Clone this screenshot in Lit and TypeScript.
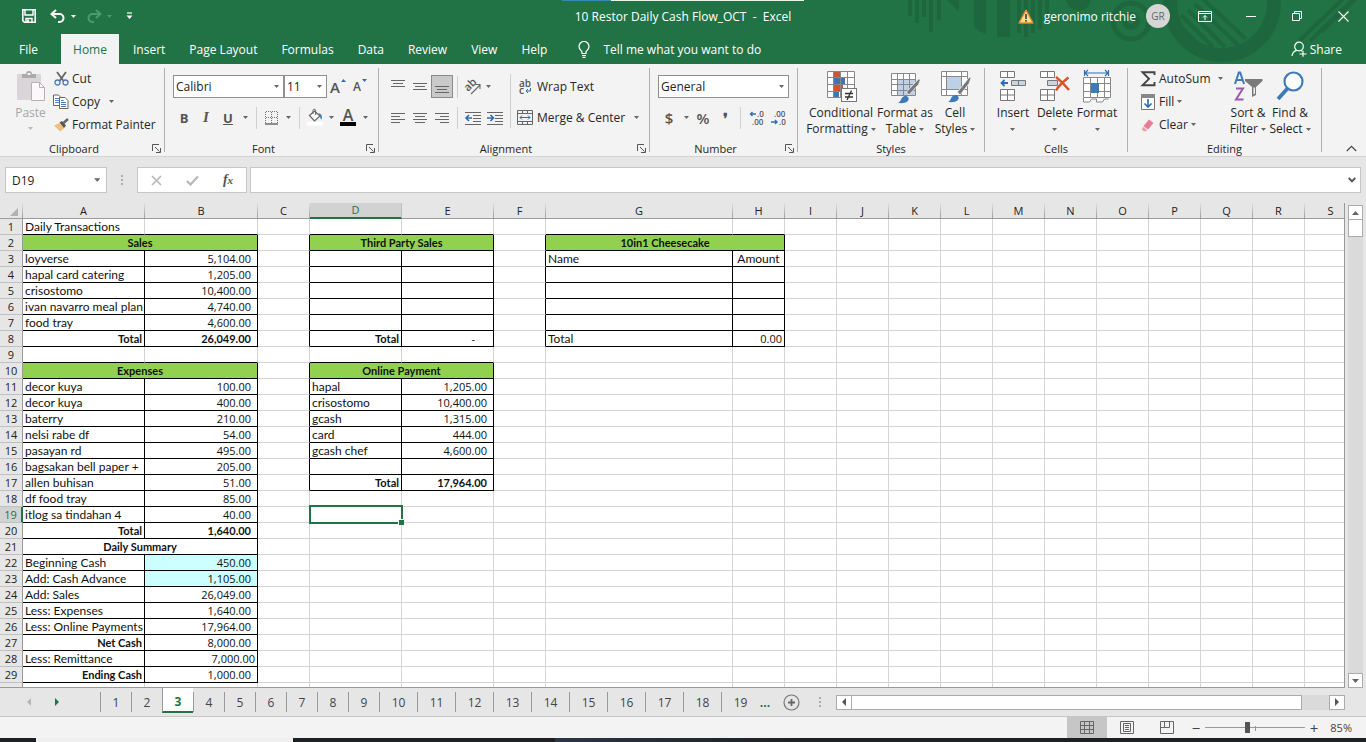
import { LitElement, html, svg, css, nothing } from "lit";
import { customElement, state } from "lit/decorators.js";
import { classMap } from "lit/directives/class-map.js";

/* ---------- icons ---------- */
const icon = (w: number, h: number, body: unknown) =>
  html`<svg class="ic" width=${w} height=${h} viewBox="0 0 ${w} ${h}" fill="none" aria-hidden="true">${body}</svg>`;

const arrow = html`<svg class="ic arrow" width="5" height="3" viewBox="0 0 5 3" aria-hidden="true"><path d="M0 0h5L2.5 3z" fill="currentColor"/></svg>`;

const lines = (rows: number[][]) =>
  svg`${rows.map(([x, y, w]) => svg`<rect x=${x} y=${y} width=${w} height="1" fill="#666"/>`)}`;

const icons = {
  save: icon(14, 14, svg`<path d="M.8.8h12.4v12.4H2.4L.8 11.6z" stroke="#fff" stroke-width="1.6"/><path d="M3 1v5h8V1M4 13V9.5h6V13" stroke="#fff" stroke-width="1.4"/><rect x="5" y="10.5" width="2" height="3" fill="#fff"/>`),
  undo: icon(16, 14, svg`<path d="M6 1 1.5 5 6 9M2 5h7.5a4 4 0 0 1 0 8H8" stroke="#fff" stroke-width="2"/>`),
  redo: icon(16, 14, svg`<path d="m10 1 4.500 4L10 9M14 5H6.500a4 4 0 0 0 0 8H8" stroke="#4f9870" stroke-width="2"/>`),
  qat: icon(7, 8, svg`<path d="M1 1h5" stroke="#fff" stroke-width="1.200"/><path d="M.5 3.500h6L3.500 7z" fill="#fff"/>`),
  warn: icon(16, 15, svg`<path d="M8 1 15 14H1z" fill="#fcdc8f" stroke="#e8892b" stroke-width="1.400" stroke-linejoin="round"/><path d="M8 5v5M8 11v1.800" stroke="#333" stroke-width="1.500"/>`),
  display: icon(14, 11, svg`<path d="M.5.5h13v10H.5zM.5 2.500h13M7 9V4.500M5 6.500l2-2 2 2" stroke="#fff"/>`),
  min: icon(10, 10, svg`<path d="M0 5.500h10" stroke="#fff"/>`),
  restore: icon(10, 10, svg`<path d="M.5 2.500h7v7h-7zM2.500 2.500v-2h7v7h-2" stroke="#fff"/>`),
  close: icon(11, 11, svg`<path d="m.5.5 10 10M10.500.5l-10 10" stroke="#fff" stroke-width="1.100"/>`),
  bulb: icon(12, 17, svg`<path d="M4 12.500V11C3.500 9.500 1 8.500 1 5.500a5 5 0 0 1 10 0c0 3-2.500 4-3 5.500v1.500zM4 14.500h4M4.500 16.300h3" stroke="#fff" stroke-width="1.200"/>`),
  share: icon(16, 16, svg`<circle cx="8" cy="5.500" r="4.300" stroke="#fff" stroke-width="1.200"/><path d="M1 15c.3-3 2-5 4.700-5.700M10 9.500l1 .8M8.500 13h7M12 9.800v6" stroke="#fff" stroke-width="1.200"/>`),
  paste: icon(30, 31, svg`<rect x="1" y="3" width="24" height="26" rx="1" fill="#d9d5d9"/><path d="M6 3h4a3 3 0 0 1 6 0h4v4H6z" fill="#aaa"/><rect x="11.500" y="2" width="3" height="2" fill="#f3f3f3"/><path d="M15.500 11.500h8l5 5v13h-13z" fill="#faf8fa" stroke="#b4b0b4"/><path d="M23.500 11.500v5h5" stroke="#b4b0b4"/>`),
  cut: icon(15, 15, svg`<path d="m3 1 6.500 9M12 1 5.500 10" stroke="#666" stroke-width="1.800"/><circle cx="3.500" cy="11.500" r="2.500" stroke="#4a7ebb" stroke-width="1.300"/><circle cx="11.500" cy="11.500" r="2.500" stroke="#4a7ebb" stroke-width="1.300"/>`),
  copy: icon(16, 15, svg`<path d="M.5 1h5l2 2v8.500h-7z" fill="#fff" stroke="#666"/><path d="M2 4.500h4M2 6.500h4M2 8.500h4" stroke="#4a7ebb"/><path d="M6.500 3.500h5.500l3 3v8H6.500z" fill="#fff" stroke="#666"/><path d="M8 8.500h5M8 10.500h5M8 12.500h5M8 6.500h2.500" stroke="#4a7ebb"/>`),
  painter: icon(16, 14, svg`<path d="M1 7.500 6.500 5l5 5L7 13.500z" fill="#edc07d"/><path d="M6.500 4.500 9 3l4 4.500-2 2.500z" fill="#555"/><path d="m10.500 5 4.500-4" stroke="#666" stroke-width="2.500"/>`),
  borders: icon(14, 14, svg`<path d="M1 .5h12M.5 1v11M6.500 1v11M12.500 1v11M1 6.500h12" stroke="#777" stroke-dasharray="1 1"/><path d="M0 13h13" stroke="#555" stroke-width="1.300"/>`),
  fill: icon(16, 17, svg`<path d="m2.500 6.500 5-4.500 5.500 5-5.500 5z" fill="#fff" stroke="#666" stroke-width="1.200"/><path d="M6 5V1.500a1.300 1.300 0 0 1 2.600 0V6" stroke="#666"/><path d="M11 4.500c3-.5 4.500 1.500 3.800 6-1.300-.5-1.800-2.500-2-3.500z" fill="#4a7ebb"/><rect y="13" width="16" height="3.500" fill="#fff"/>`),
  orient: icon(20, 16, svg`<text x="0" y="0" transform="translate(5 13) rotate(-45)" font-size="11" font-weight="600" fill="#555">ab</text><path d="m8 15 9-9M12.500 5.500h4.500V10" stroke="#666" stroke-width="1.100"/>`),
  indentOut: icon(16, 14, svg`${lines([[0, 1, 16], [8, 4, 8], [8, 7, 8], [8, 10, 8], [0, 13, 16]])}<path d="M7 7H1.500M4 4 1 7l3 3" stroke="#2f6eb5" stroke-width="1.600"/>`),
  indentIn: icon(16, 14, svg`${lines([[0, 1, 16], [8, 4, 8], [8, 7, 8], [8, 10, 8], [0, 13, 16]])}<path d="M0 7h6M3.500 4l3 3-3 3" stroke="#2f6eb5" stroke-width="1.600"/>`),
  wrap: icon(14, 16, svg`<text x="1" y="8" font-size="10" font-weight="600" fill="#555">ab</text><text x="1" y="15" font-size="10" font-weight="600" fill="#555">c</text><path d="M12.500 9v3H8M10 10l-2 2 2 2" stroke="#2f6eb5"/>`),
  merge: icon(16, 15, svg`<path d="M.5.5h15v14H.5zM.5 3.500h15M.5 11.500h15M5.500.5v3M10.500.5v3M5.500 11.500v3M10.500 11.500v3" stroke="#666"/><path d="M3 7.500h10M5 5.500l-2 2 2 2M11 5.500l2 2-2 2" stroke="#2f6eb5"/>`),
  decInc: icon(15, 14, svg`<path d="M7 3H1.500M3.500 1l-2 2 2 2" stroke="#2f6eb5" stroke-width="1.400"/><text x="8" y="6" font-size="8" font-weight="600" fill="#555">.0</text><text x="3" y="14" font-size="8" font-weight="600" fill="#555">.00</text>`),
  decDec: icon(15, 14, svg`<path d="M0 11h6M4 9l2 2-2 2" stroke="#2f6eb5" stroke-width="1.400"/><text x="3" y="6" font-size="8" font-weight="600" fill="#555">.00</text><text x="8" y="14" font-size="8" font-weight="600" fill="#555">.0</text>`),
  conditional: icon(30, 32, svg`<path d="M1.500.5h27v26h-27z" fill="#fff"/><rect x="8" y="0" width="7" height="6" fill="#d35230"/><rect x="8" y="7" width="11" height="6" fill="#3f74b5"/><rect x="8" y="14" width="9" height="6" fill="#d35230"/><rect x="8" y="20" width="5" height="7" fill="#3f74b5"/><path d="M1.500.5h27v26h-27zM7.500 0v27M14.500 0v27M21.500 0v27M1 6.500h28M1 13.500h28M1 20.500h28" stroke="#888"/><rect x="15.500" y="17.500" width="15" height="13" fill="#fff" stroke="#777"/><path d="M19 22.500h8M19 26h8M25.500 19.500l-4.500 9.500" stroke="#333" stroke-width="1.300"/>`),
  table: icon(32, 32, svg`<path d="M2.500 2.500h24v22h-24z" fill="#fff"/><path d="M8 8h18v16H8z" fill="#bdd0e6"/><path d="M2.500 2.500h24v22h-24zM8.500 2v23M14.500 2v23M20.500 2v23M2 8.500h25M2 13.500h25M2 19.500h25" stroke="#888"/><path d="m17.500 21 12-13 2 .5-2 5L20 24z" fill="#777" stroke="#f3f3f3" stroke-width=".8"/><path d="M9 32c3.500-1.500 2.500-5 5.500-6.500 3-1.500 6 .5 5 3.500-1.300 3-6 3.500-10.500 3z" fill="#3f7ab8"/>`),
  cellStyles: icon(32, 32, svg`<path d="M2.500.5h26v24h-26z" fill="#fff"/><path d="M8 6h14v12H8z" fill="#bdd0e6"/><path d="M2.500.5h26v24h-26zM7.500 0v25M22.500 0v25M2 5.500h27M2 18.500h27" stroke="#888"/><path d="m18.500 21 12-15 1.500 1-2 5.500L21 24z" fill="#777" stroke="#f3f3f3" stroke-width=".8"/><path d="M9 31c3.500-1.500 2.500-5 5.500-6.500 3-1.500 6 .5 5 3.500-1.300 3-6 3.500-10.500 3z" fill="#3f7ab8"/>`),
  insert: icon(28, 32, svg`<path d="M1.500.5h14v6h-14zM8.500.5v6M1.500 18.500h14v11h-14zM8.500 18v12M1 24h15" fill="#fff" stroke="#777"/><path d="M12.500 9.500h14v5h-14zM19.500 9v6" fill="#c9d6e2" stroke="#777"/><path d="M9 12H3M5.500 9 2.500 12l3 3" stroke="#2f6eb5" stroke-width="1.800"/>`),
  del: icon(32, 32, svg`<path d="M1.500.5h14v6h-14zM8.500.5v6M1.500 18.500h14v11h-14zM8.500 18v12M1 24h15" fill="#fff" stroke="#777"/><path d="M8.500 9.500h10v5h-10z" fill="#c9d6e2" stroke="#777"/><path d="M17 6c5 4 9 8 13 13M29.500 6.500C25 10 20 14 17 19.500" stroke="#d9532c" stroke-width="2.400"/>`),
  format: icon(30, 32, svg`<path d="M2 2h25M2.500-1v6M26.500-1v6M6-1 3 2l3 3M23-1l3 3-3 3" stroke="#2f6eb5" stroke-width="1.200"/><path d="M1.500 6.500h27v20h-27zM1.500 27v4h6l2-3h5v3h6l2-3h4" fill="#fff" stroke="#888"/><path d="M8.500 6v21M15.500 6v21M22.500 6v21M1 12.500h28M1 20.500h28" stroke="#888"/><rect x="9" y="12" width="8" height="10" fill="#3f7ab8"/>`),
  sum: icon(15, 16, svg`<path d="M13.500 4V1.200H1.500L8 7.800l-6.500 6.500h12V11" stroke="#444" stroke-width="1.900"/>`),
  fillDown: icon(14, 16, svg`<path d="M.5.5h13v15H.5z" fill="#fff" stroke="#777"/><rect x="0" y="0" width="14" height="4" fill="#888"/><path d="M7 5v8M3.500 9.500 7 13l3.500-3.500" stroke="#2f6eb5" stroke-width="1.700"/>`),
  clear: icon(14, 14, svg`<path d="M8 1.500 12.500 5 7 11.500 2.500 8z" fill="#e87d91"/><path d="M2 8.800 6 12l-1 1.300H2.500L.8 11.500z" fill="#ee9fae"/>`),
  sort: icon(30, 32, svg`<path d="m2 13 3.800-11.500h1.400L11 13M3.500 9h6" stroke="#3f7ab8" stroke-width="2"/><path d="M3 17.500h7L3 28.500h7.500" stroke="#9b59b0" stroke-width="2"/><path d="M12 8h17.500v2L23 16v8l-4 2V16l-7-6z" fill="#7a7a7a"/><path d="M20.500 16.500h1.500v6l-1.500 1z" fill="#f3f3f3"/>`),
  find: icon(28, 31, svg`<circle cx="17.500" cy="10.500" r="9" fill="#fff" stroke="#3f7ab8" stroke-width="2.200"/><path d="M11.500 17.500 2 28" stroke="#3f7ab8" stroke-width="3.800"/>`),
  launcher: icon(9, 9, svg`<path d="M.5 7V.5H7M3 3l4.500 4.500M8.500 4v4.500H4" stroke="#555"/>`),
  collapse: icon(11, 7, svg`<path d="m.8 6 4.700-4.700L10.200 6" stroke="#444" stroke-width="1.100"/>`),
  cancel: icon(11, 11, svg`<path d="m1 1 9 9M10 1 1 10" stroke="#b8b8b8" stroke-width="1.700"/>`),
  enter: icon(13, 11, svg`<path d="m1 6 3.500 3.500L12 1.500" stroke="#b8b8b8" stroke-width="2.200"/>`),
  expand: icon(8, 6, svg`<path d="m.8 1 3.200 3.300L7.200 1" stroke="#555" stroke-width="1.900"/>`),
  corner: icon(9, 9, svg`<path d="M8 0v8H0z" fill="#b1b1b1"/>`),
  up: icon(7, 4, svg`<path d="M0 4h7L3.500 0z" fill="#666"/>`),
  down: icon(7, 4, svg`<path d="M0 0h7L3.500 4z" fill="#666"/>`),
  left: icon(4, 8, svg`<path d="M4 0v8L0 4z" fill="currentColor"/>`),
  right: icon(4, 8, svg`<path d="M0 0v8l4-4z" fill="currentColor"/>`),
  add: icon(17, 17, svg`<circle cx="8.500" cy="8.500" r="7.500" stroke="#777" stroke-width="1.200"/><path d="M8.500 5v7M5 8.500h7" stroke="#666" stroke-width="1.800"/>`),
  dots: icon(2, 10, svg`<path d="M1 0v2M1 4v2M1 8v2" stroke="#999" stroke-width="1.500"/>`),
  viewNormal: icon(14, 13, svg`<path d="M.5.5h13v12H.5zM4.500 0v13M9.500 0v13M0 4.500h14M0 8.500h14" stroke="#666"/>`),
  viewPage: icon(14, 13, svg`<path d="M.5.5h13v12H.5zM3.500 2.500h7v8h-7zM5 4.500h4M5 6.500h4M5 8.500h4" stroke="#666"/>`),
  viewBreak: icon(14, 13, svg`<path d="M.5.5h13v12H.5zM4.500.5v6h5v-6M.5 6.500h4" stroke="#666"/>`),
};

const alignIcon = (rows: number[][]) => icon(14, 14, lines(rows));
const alignIcons = {
  top: alignIcon([[0, 0, 14], [2, 3, 10], [0, 6, 14]]),
  middle: alignIcon([[0, 3, 14], [2, 6, 10], [0, 9, 14]]),
  bottom: alignIcon([[0, 6, 14], [2, 9, 10], [0, 12, 14]]),
  left: alignIcon([[0, 2, 14], [0, 5, 9], [0, 8, 14], [0, 11, 9]]),
  center: alignIcon([[0, 2, 14], [2, 5, 10], [0, 8, 14], [2, 11, 10]]),
  right: alignIcon([[0, 2, 14], [5, 5, 9], [0, 8, 14], [5, 11, 9]]),
};

/* ---------- workbook data ---------- */
interface Cell {
  text?: string;
  kind?: "label" | "total" | "num" | "sum" | "head" | "title" | "flush" | "dash" | "center";
  span?: number;
  tint?: boolean;
}
const COLS: [string, number][] = [
  ["A", 122], ["B", 113], ["C", 52], ["D", 92], ["E", 92], ["F", 52], ["G", 187], ["H", 52],
  ["I", 52], ["J", 52], ["K", 52], ["L", 52], ["M", 52], ["N", 52], ["O", 52], ["P", 52],
  ["Q", 52], ["R", 52], ["S", 52],
];
const ROWS = 30;
/* first column, last column, first row, last row of every ruled block */
const BLOCKS = [[0, 1, 2, 8], [3, 4, 2, 8], [6, 7, 2, 8], [0, 1, 10, 29], [3, 4, 10, 17]];
const ruled = (c: number, r: number) => BLOCKS.some(([a, b, y, z]) => c >= a && c <= b && r >= y && r <= z);

const cells: Record<string, Cell> = {};
const put = (ref: string, text: string, kind: Cell["kind"], extra: Partial<Cell> = {}) => {
  cells[ref] = { text, kind, ...extra };
};
const pairs = (c1: string, c2: string, from: number, rows: [string, string][]) =>
  rows.forEach(([a, b], i) => {
    put(c1 + (from + i), a, "label");
    put(c2 + (from + i), b, "num");
  });

put("A1", "Daily Transactions", "label");
put("A2", "Sales", "head", { span: 2 });
pairs("A", "B", 3, [["loyverse", "5,104.00"], ["hapal card catering", "1,205.00"], ["crisostomo", "10,400.00"], ["ivan navarro meal plan", "4,740.00"], ["food tray", "4,600.00"]]);
put("A8", "Total", "total");
put("B8", "26,049.00", "sum");
put("A10", "Expenses", "head", { span: 2 });
pairs("A", "B", 11, [["decor kuya", "100.00"], ["decor kuya", "400.00"], ["baterry", "210.00"], ["nelsi rabe df", "54.00"], ["pasayan rd", "495.00"], ["bagsakan bell paper +", "205.00"], ["allen buhisan", "51.00"], ["df food tray", "85.00"], ["itlog sa tindahan 4", "40.00"]]);
put("A20", "Total", "total");
put("B20", "1,640.00", "sum");
put("A21", "Daily Summary", "title", { span: 2 });
pairs("A", "B", 22, [["Beginning Cash", "450.00"], ["Add: Cash Advance", "1,105.00"], ["Add: Sales", "26,049.00"], ["Less: Expenses", "1,640.00"], ["Less: Online Payments", "17,964.00"], ["Net Cash", "8,000.00"], ["Less: Remittance", "7,000.00"], ["Ending Cash", "1,000.00"]]);
cells.B22.tint = cells.B23.tint = true;
cells.A27.kind = cells.A29.kind = "total";
cells.B28.kind = "flush";
put("D2", "Third Party Sales", "head", { span: 2 });
put("D8", "Total", "total");
put("E8", "-", "dash");
put("D10", "Online Payment", "head", { span: 2 });
pairs("D", "E", 11, [["hapal", "1,205.00"], ["crisostomo", "10,400.00"], ["gcash", "1,315.00"], ["card", "444.00"], ["gcash chef", "4,600.00"]]);
put("D17", "Total", "total");
put("E17", "17,964.00", "sum");
put("G2", "10in1 Cheesecake", "head", { span: 2 });
put("G3", "Name", "label");
put("H3", "Amount", "center");
put("G8", "Total", "label");
put("H8", "0.00", "flush");

@customElement("xl-titlebar")
export class XlTitlebar extends LitElement {
  static styles = css`
    :host { display: block; position: relative; background: #217346; color: #fff; overflow: hidden; }
    * { box-sizing: border-box; }
    .art { position: absolute; right: 0; top: 0; }
    .progress { position: absolute; top: 0; left: 50%; width: 242px; height: 1px; margin-left: -121px; background: linear-gradient(90deg, #2f8fae 49px, #e6f4ec 49px); }
    .bar { position: relative; display: grid; grid-template-columns: 1fr auto 1fr; align-items: center; height: 32px; }
    .side { display: flex; align-items: center; }
    .quick { padding-left: 18px; }
    .end { justify-content: flex-end; }
    button { display: flex; align-items: center; justify-content: center; border: 0; padding: 0; background: none; color: inherit; font: inherit; height: 30px; }
    .ic { display: block; flex: none; }
    .q { width: 22px; }
    .q:first-child { margin-right: 7px; }
    .more { width: 9px; margin-right: 5px; }
    .dim { color: #4f9870; }
    .menu { width: 20px; }
    h1 { margin: 0; font-size: 12px; font-weight: 400; white-space: pre; }
    .user { gap: 10px; margin-right: 12px; }
    .face { display: grid; place-items: center; width: 24px; height: 24px; border-radius: 50%; background: #d6d6d6; color: #666; font-size: 10px; }
    .win { width: 46px; }
    .tabs { position: relative; display: flex; height: 32px; padding: 0 16px 0 0; }
    .tab { height: 30px; margin-top: 2px; padding: 0 12px; }
    .file { width: 61px; padding: 0 4px 0 0; }
    .on { background: #f3f3f3; color: #217346; width: 58px; margin-right: 2px; padding: 0; }
    .tell { gap: 13px; padding: 0 19px; }
    .share { margin-left: auto; gap: 3px; padding: 0 8px; }
  `;
  render() {
    const tabs = ["Home", "Insert", "Page Layout", "Formulas", "Data", "Review", "View", "Help"];
    return html`
      <svg class="art" width="466" height="64" viewBox="0 0 466 64" fill="none" aria-hidden="true">
        <g stroke="#1e673e" stroke-width="4">
          <path d="M10-1v17M17-1v24M24-1v18M31-1v33M39-1v21"/>
          <path d="M119-1v34M126-1v38M133-1v34M140-1v30M147-1v22"/>
          <circle cx="231" cy="21" r="18" stroke-width="5"/>
          <circle cx="231" cy="21" r="6" stroke-width="6"/>
          <circle cx="322" cy="3" r="52" stroke-width="14"/>
          <path d="m276 22 22 22M281 15l32 32M288 10l37 37M295 4l44 42M303-1l43 40"/>
          <path d="m399 41 50-48M410 41l54-52M421 32l46-44"/>
        </g>
        <path d="M47 0l12 12V0zM74 0h12v34c-6-2-12-6-12-9zM97 0h13v37H97zM166 0h25c-3 14-22 14-25 0z" fill="#1e673e"/>
      </svg>
      <div class="progress"></div>
      <div class="bar">
        <div class="side quick">
          <button class="q" aria-label="Save">${icons.save}</button>
          <button class="q" aria-label="Undo">${icons.undo}</button>
          <button class="more" aria-label="Undo list">${arrow}</button>
          <button class="q" aria-label="Redo">${icons.redo}</button>
          <button class="more dim" aria-label="Redo list">${arrow}</button>
          <button class="menu" aria-label="Customize toolbar">${icons.qat}</button>
        </div>
        <h1>10 Restor Daily Cash Flow_OCT  -  Excel</h1>
        <div class="side end">
          <button class="user">${icons.warn}<span>geronimo ritchie</span><span class="face">GR</span></button>
          <button class="win" aria-label="Ribbon display">${icons.display}</button>
          <button class="win" aria-label="Minimize">${icons.min}</button>
          <button class="win" aria-label="Restore">${icons.restore}</button>
          <button class="win" aria-label="Close">${icons.close}</button>
        </div>
      </div>
      <nav class="tabs">
        <button class="tab file">File</button>
        ${tabs.map((t) => html`<button class=${classMap({ tab: true, on: t === "Home" })}>${t}</button>`)}
        <button class="tab tell">${icons.bulb}<span>Tell me what you want to do</span></button>
        <button class="tab share">${icons.share}<span>Share</span></button>
      </nav>`;
  }
}

@customElement("xl-ribbon")
export class XlRibbon extends LitElement {
  static styles = css`
    :host { box-sizing: border-box; display: flex; height: 93px; background: #f3f3f3; border-bottom: 1px solid #d2d2d2; color: #262626; overflow: hidden; }
    * { box-sizing: border-box; }
    .ic { display: block; flex: none; overflow: visible; }
    .arrow { color: #666; }
    .group { display: flex; flex-direction: column; flex: none; }
    .body { display: flex; flex: 1; }
    .foot { display: flex; align-items: center; height: 16px; }
    .foot span { flex: 1; text-align: center; font-size: 11px; }
    .foot button { width: 16px; }
    .rule { flex: none; width: 1px; margin: 4px 0; background: #b1b1b1; }
    .clip { width: 164px; }
    .font { width: 213px; }
    .align { width: 270px; }
    .number { width: 147px; }
    .styles { width: 186px; }
    .cells { width: 142px; }
    .edit { width: 193px; }
    button { display: flex; align-items: center; justify-content: center; border: 0; padding: 0; background: none; color: inherit; font: inherit; white-space: nowrap; }
    .col { display: flex; flex-direction: column; }
    .three { padding-top: 3px; }
    .three button { height: 23px; justify-content: flex-start; gap: 3px; }
    .three .slot { display: flex; justify-content: center; width: 16px; }
    .paste { width: 53px; padding: 7px 0 0 8px; color: #a6a6a6; flex-direction: column; justify-content: flex-start; }
    .paste span { line-height: 16px; padding: 3px 0 6px; }
    .paste .arrow { color: #b8b8b8; }
    .gapped { margin-left: 6px; }
    .two { padding: 10px 0 0 8px; gap: 6px; }
    .two.flush { padding-left: 0; }
    .row { display: flex; align-items: center; height: 25px; }
    .t { width: 22px; height: 22px; }
    .n { width: 20px; height: 22px; }
    .a { width: 12px; height: 22px; }
    .a.tight { width: 8px; }
    .on { background: #c9c9c9; border: 1px solid #8a8a8a; height: 23px; }
    .line { width: 1px; height: 22px; margin: 0 4px; background: #d0d0d0; }
    .line.wide { margin: 0 5px; }
    .line.tall { height: 54px; margin-top: 10px; }
    .pick { position: relative; display: flex; height: 23px; }
    .pick select { appearance: none; width: 100%; height: 100%; border: 1px solid #8f8f8f; border-radius: 0; background: #fff; color: #222; font: inherit; padding: 0 2px; margin: 0; }
    .pick .arrow { position: absolute; right: 5px; top: 10px; pointer-events: none; }
    .face { width: 111px; }
    .size { width: 43px; }
    .fmt { width: 131px; }
    .glyph { font-weight: 700; font-size: 13px; color: #555; }
    .it { font-family: "Liberation Serif", serif; font-style: italic; font-size: 15px; }
    .un { text-decoration: underline; }
    .money { font-size: 15px; color: #555; font-weight: 600; }
    .ink { flex-direction: column; font-size: 16px; line-height: 13px; font-weight: 600; color: #555; }
    .ink::after { content: ""; width: 16px; height: 4px; background: #000; }
    .grow { gap: 1px; align-items: center; font-size: 15px; font-weight: 600; color: #555; }
    .grow.small { font-size: 12px; }
    .tip { align-self: flex-start; margin-top: 3px; color: #2f6eb5; }
    .act { justify-content: flex-start; }
    .act .slot { display: flex; justify-content: center; width: 20px; margin-right: 2px; }
    .act .arrow { margin-left: 9px; }
    .big { flex-direction: column; justify-content: flex-start; padding-top: 7px; gap: 2px; height: 76px; }
    .pic { display: flex; height: 32px; align-items: flex-start; }
    .cap { display: block; line-height: 16px; text-align: center; }
    .cap .arrow { display: inline-block; vertical-align: middle; }
    .w1 { width: 74px; }
    .w2 { width: 54px; }
    .w3 { width: 46px; }
    .w4 { width: 42px; }
    .w5 { width: 93px; }
    .pad { padding-left: 6px; }
    .cells .pad { padding-left: 7px; }
    .end { display: flex; flex: 1; justify-content: flex-end; align-items: flex-end; padding: 0 9px 4px 0; }
    .push { margin-left: auto; margin-right: 4px; }
  `;
  private foot(name: string, launch = true) {
    return html`<div class="foot"><span>${name}</span>${launch ? html`<button aria-label="${name} settings">${icons.launcher}</button>` : nothing}</div>`;
  }
  private big(cls: string, pic: unknown, one: string, two = "") {
    return html`<button class="big ${cls}"><span class="pic">${pic}</span><span class="cap">${one}<br />${two} ${arrow}</span></button>`;
  }
  private tip(up: boolean) {
    return html`<svg class="ic tip" width="5" height="3" viewBox="0 0 5 3" aria-hidden="true"><path d=${up ? "M0 3h5L2.500 0z" : "M0 0h5L2.500 3z"} fill="currentColor" /></svg>`;
  }
  render() {
    return html`
      <section class="group clip">
        <div class="body">
          <button class="paste">${icons.paste}<span>Paste</span>${arrow}</button>
          <div class="col three">
            <button><span class="slot">${icons.cut}</span>Cut</button>
            <button><span class="slot">${icons.copy}</span>Copy<span class="gapped">${arrow}</span></button>
            <button><span class="slot">${icons.painter}</span>Format Painter</button>
          </div>
        </div>
        ${this.foot("Clipboard")}
      </section>
      <div class="rule"></div>
      <section class="group font">
        <div class="body col two">
          <div class="row">
            <label class="pick face"><select aria-label="Font"><option>Calibri</option></select>${arrow}</label>
            <label class="pick size"><select aria-label="Font size"><option>11</option></select>${arrow}</label>
            <button class="t grow" aria-label="Increase font size">A${this.tip(true)}</button>
            <button class="t grow small" aria-label="Decrease font size">A${this.tip(false)}</button>
          </div>
          <div class="row">
            <button class="t glyph">B</button>
            <button class="t glyph it">I</button>
            <button class="t glyph un">U</button>
            <button class="a" aria-label="Underline styles">${arrow}</button>
            <span class="line wide"></span>
            <button class="n" aria-label="Borders">${icons.borders}</button>
            <button class="a" aria-label="Border styles">${arrow}</button>
            <span class="line wide"></span>
            <button class="n" aria-label="Fill color">${icons.fill}</button>
            <button class="a" aria-label="Fill colors">${arrow}</button>
            <button class="t ink" aria-label="Font color">A</button>
            <button class="a" aria-label="Font colors">${arrow}</button>
          </div>
        </div>
        ${this.foot("Font")}
      </section>
      <div class="rule"></div>
      <section class="group align">
        <div class="body">
          <div class="col two">
            <div class="row">
              <button class="t" aria-label="Top align">${alignIcons.top}</button>
              <button class="t" aria-label="Middle align">${alignIcons.middle}</button>
              <button class="t on" aria-label="Bottom align">${alignIcons.bottom}</button>
              <span class="line"></span>
              <button class="t" aria-label="Orientation">${icons.orient}</button>
              <button class="a tight" aria-label="Orientations">${arrow}</button>
            </div>
            <div class="row">
              <button class="t" aria-label="Align left">${alignIcons.left}</button>
              <button class="t" aria-label="Center">${alignIcons.center}</button>
              <button class="t" aria-label="Align right">${alignIcons.right}</button>
              <span class="line"></span>
              <button class="t" aria-label="Decrease indent">${icons.indentOut}</button>
              <button class="t" aria-label="Increase indent">${icons.indentIn}</button>
            </div>
          </div>
          <span class="line tall"></span>
          <div class="col two flush">
            <button class="row act"><span class="slot">${icons.wrap}</span>Wrap Text</button>
            <button class="row act"><span class="slot">${icons.merge}</span>Merge &amp; Center${arrow}</button>
          </div>
        </div>
        ${this.foot("Alignment")}
      </section>
      <div class="rule"></div>
      <section class="group number">
        <div class="body col two">
          <div class="row"><label class="pick fmt"><select aria-label="Number format"><option>General</option></select>${arrow}</label></div>
          <div class="row">
            <button class="t money">$</button>
            <button class="a" aria-label="Currencies">${arrow}</button>
            <button class="t money">%</button>
            <button class="t money" aria-label="Comma style">❜</button>
            <span class="line"></span>
            <button class="t" aria-label="Increase decimal">${icons.decInc}</button>
            <button class="t" aria-label="Decrease decimal">${icons.decDec}</button>
          </div>
        </div>
        ${this.foot("Number")}
      </section>
      <div class="rule"></div>
      <section class="group styles">
        <div class="body pad">
          ${this.big("w1", icons.conditional, "Conditional", "Formatting")}
          ${this.big("w2", icons.table, "Format as", "Table")}
          ${this.big("w3", icons.cellStyles, "Cell", "Styles")}
        </div>
        ${this.foot("Styles", false)}
      </section>
      <div class="rule"></div>
      <section class="group cells">
        <div class="body pad">
          ${this.big("w4", icons.insert, "Insert")} ${this.big("w4", icons.del, "Delete")} ${this.big("w4", icons.format, "Format")}
        </div>
        ${this.foot("Cells", false)}
      </section>
      <div class="rule"></div>
      <section class="group edit">
        <div class="body pad">
          <div class="col three pad w5">
            <button><span class="slot">${icons.sum}</span>AutoSum<span class="push">${arrow}</span></button>
            <button><span class="slot">${icons.fillDown}</span>Fill ${arrow}</button>
            <button><span class="slot">${icons.clear}</span>Clear ${arrow}</button>
          </div>
          ${this.big("w4", icons.sort, "Sort &", "Filter")} ${this.big("w4", icons.find, "Find &", "Select")}
        </div>
        ${this.foot("Editing", false)}
      </section>
      <div class="rule"></div>
      <div class="end"><button aria-label="Collapse the ribbon">${icons.collapse}</button></div>`;
  }
}

@customElement("xl-formula")
export class XlFormula extends LitElement {
  static styles = css`
    :host { box-sizing: border-box; display: flex; height: 46px; padding: 10px 5px; background: #e6e6e6; }
    * { box-sizing: border-box; }
    .ic { display: block; }
    .box { display: flex; align-items: center; height: 26px; border: 1px solid #c6c6c6; background: #fff; }
    .name { width: 102px; padding-right: 6px; color: #666; }
    input { width: 100%; min-width: 0; border: 0; outline: 0; background: none; font: inherit; color: #222; padding: 0 6px; }
    .grip { display: flex; align-items: center; width: 30px; justify-content: center; }
    .tools { width: 110px; }
    .text { flex: 1; margin-left: 3px; padding-right: 3px; }
    button { display: flex; flex: 1; align-items: center; justify-content: center; height: 24px; border: 0; padding: 0; background: none; }
    .fx { font: italic 700 14px "Liberation Serif", serif; color: #555; }
    .fx small { font-size: 11px; }
    .open { flex: none; width: 10px; }
  `;
  render() {
    return html`
      <label class="box name"><input aria-label="Name box" value="D19" />${icons.down}</label>
      <span class="grip">${icons.dots}</span>
      <div class="box tools">
        <button aria-label="Cancel">${icons.cancel}</button>
        <button aria-label="Enter">${icons.enter}</button>
        <button class="fx" aria-label="Insert function"><span>f<small>x</small></span></button>
      </div>
      <div class="box text"><input aria-label="Formula bar" /><button class="open" aria-label="Expand formula bar">${icons.expand}</button></div>`;
  }
}

@customElement("xl-sheet")
export class XlSheet extends LitElement {
  @state() private active = "D19";
  static styles = css`
    :host { display: flex; flex: 1; min-height: 0; background: #e6e6e6; }
    * { box-sizing: border-box; }
    .ic { display: block; }
    .view { flex: 1; min-width: 0; overflow: hidden; border-right: 1px solid #999; border-bottom: 1px solid #999; }
    table { table-layout: fixed; border-collapse: separate; border-spacing: 0; width: 1280px; background: #fff; }
    .rowhead { width: 23px; }
    th, td { height: 16px; padding: 0; border-right: 1px solid #d4d4d4; border-bottom: 1px solid #d4d4d4; line-height: 15px; white-space: nowrap; overflow: hidden; }
    th { background: #e6e6e6; color: #222; font-weight: 400; font-size: 11px; text-align: center; border-color: #c0c0c0; }
    thead th { border-bottom-color: #999; border-image: linear-gradient(#e6e6e6, #999) 1; }
    tbody th { border-right-color: #999; }
    .corner svg { margin: 3px 3px 0 auto; }
    .sel { background: #d2d2d2; color: #217346; }
    thead .sel { border-image: none; border-bottom: 2px solid #217346; line-height: 14px; }
    tbody .sel { border-right: 2px solid #217346; }
    td { font-size: 11px; color: #111; }
    .kr { border-right-color: #000; }
    .kb { border-bottom-color: #000; }
    .label, .center { font-family: Lato, "Open Sans", sans-serif; font-size: 12px; }
    .label { padding-left: 2px; }
    .center { text-align: center; }
    .total, .sum, .head, .title { font-family: Lato, "Open Sans", sans-serif; font-weight: 700; }
    .total { text-align: right; padding-right: 2px; }
    .num, .sum { text-align: right; padding-right: 6px; }
    .flush { text-align: right; padding-right: 2px; }
    .dash { text-align: right; padding-right: 18px; }
    .head, .title { text-align: center; }
    .head { background: #92d050; }
    .tint { background: #ccffff; }
    .live { position: relative; z-index: 1; overflow: visible; }
    .box { position: absolute; inset: -2px -2px -2px -1px; border: 2px solid #217346; }
    .box::after { content: ""; box-sizing: border-box; position: absolute; right: -3px; bottom: -3px; width: 6px; height: 6px; background: #217346; border: 1px solid #fff; border-width: 1px 0 0 1px; }
    .scroll { display: flex; flex-direction: column; width: 21px; padding: 2px 3px 0; }
    .track { flex: 1; background: #dadada; }
    .thumb { height: 17px; background: #fff; border: 1px solid #ababab; border-top: 0; }
    .scroll button { display: grid; place-items: center; width: 15px; height: 15px; padding: 0; border: 1px solid #ababab; background: #fff; }
  `;
  private row(r: number) {
    const out: unknown[] = [];
    for (let c = 0; c < COLS.length; c++) {
      const ref = COLS[c][0] + r;
      const cell = cells[ref] ?? {};
      const span = cell.span ?? 1;
      const last = c + span - 1;
      const live = ref === this.active;
      const cls = {
        [cell.kind ?? "blank"]: true,
        tint: !!cell.tint,
        live,
        kr: ruled(last, r) || ruled(last + 1, r),
        kb: ruled(c, r) || ruled(c, r + 1),
      };
      out.push(html`<td class=${classMap(cls)} colspan=${span}>${cell.text ?? nothing}${live ? html`<div class="box"></div>` : nothing}</td>`);
      c = last;
    }
    return html`<tr><th class=${this.active.slice(1) === String(r) ? "sel" : ""} scope="row">${r}</th>${out}</tr>`;
  }
  render() {
    return html`
      <div class="view">
        <table>
          <colgroup><col class="rowhead" />${COLS.map(([, w]) => html`<col style="width:${w}px" />`)}</colgroup>
          <thead><tr><th class="corner">${icons.corner}</th>${COLS.map(([n]) => html`<th scope="col" class=${this.active[0] === n ? "sel" : ""}>${n}</th>`)}</tr></thead>
          <tbody>${Array.from({ length: ROWS }, (_, i) => this.row(i + 1))}</tbody>
        </table>
      </div>
      <div class="scroll">
        <button aria-label="Scroll up">${icons.up}</button>
        <div class="track"><div class="thumb"></div></div>
        <button aria-label="Scroll down">${icons.down}</button>
      </div>`;
  }
}

@customElement("xl-footer")
export class XlFooter extends LitElement {
  @state() private sheet = 3;
  static styles = css`
    :host { display: block; background: #e6e6e6; color: #444; }
    * { box-sizing: border-box; }
    .ic { display: block; }
    button { display: flex; align-items: center; justify-content: center; border: 0; padding: 0; background: none; color: inherit; font: inherit; }
    .bar { display: flex; align-items: center; height: 28px; padding-right: 21px; }
    .nav { display: flex; width: 100px; padding-left: 15px; }
    .nav button { width: 28px; height: 20px; color: #b5b5b5; }
    .nav .go { color: #217346; }
    .tabs { display: flex; align-self: stretch; }
    .tab { width: 31px; height: 20px; margin-top: 4px; border-left: 1px solid #999; }
    .tab.long { width: 38px; }
    .on { height: 25px; margin-top: 0; padding-top: 4px; background: #fff; color: #217346; font-weight: 700; border-bottom: 2px solid #217346; }
    .dots { width: 12px; height: 20px; color: #217346; font-weight: 700; }
    .plus { width: 40px; height: 20px; }
    .grip { display: flex; justify-content: center; width: 18px; }
    .hs { display: flex; flex: 1; margin-left: 7px; height: 15px; background: #dadada; color: #555; }
    .hs button { width: 16px; background: #fff; border: 1px solid #ababab; }
    .thumb { flex: 1; background: #fff; border: 1px solid #ababab; border-left: 0; margin-right: 27px; }
    .status { display: flex; align-items: center; justify-content: flex-end; height: 22px; border-top: 1px solid #c6c6c6; background: #f3f3f3; padding-right: 14px; font-size: 11px; }
    .view { width: 40px; height: 21px; }
    .cur { background: #c6c6c6; }
    .z { width: 18px; height: 20px; font-size: 15px; }
    .pct { width: 29px; text-align: right; white-space: nowrap; }
    .slide { position: relative; display: flex; width: 100px; }
    .slide::after { content: ""; position: absolute; left: 50px; top: 7px; width: 1px; height: 5px; background: #999; }
    input { appearance: none; width: 100%; height: 18px; margin: 0; background: linear-gradient(#999, #999) center / 100% 1px no-repeat; }
    input::-webkit-slider-thumb { appearance: none; width: 5px; height: 11px; background: #555; }
    .task { display: flex; height: 4px; background: #1d2022; }
    .lit { width: 257px; margin-left: 36px; background: #efefef; }
    .dark { flex: 1; margin-left: 262px; background: linear-gradient(90deg, #2a3644, #1d2022 240px); }
  `;
  render() {
    return html`
      <div class="bar">
        <div class="nav"><button aria-label="Previous sheets">${icons.left}</button><button class="go" aria-label="Next sheets">${icons.right}</button></div>
        <div class="tabs">
          ${Array.from({ length: 19 }, (_, i) => i + 1).map(
            (n) => html`<button class=${classMap({ tab: true, long: n > 9, on: n === this.sheet })} @click=${() => (this.sheet = n)}>${n}</button>`,
          )}
        </div>
        <button class="dots">...</button>
        <button class="plus" aria-label="New sheet">${icons.add}</button>
        <span class="grip">${icons.dots}</span>
        <div class="hs"><button aria-label="Scroll left">${icons.left}</button><div class="thumb"></div><button aria-label="Scroll right">${icons.right}</button></div>
      </div>
      <div class="status">
        <button class="view cur" aria-label="Normal">${icons.viewNormal}</button>
        <button class="view" aria-label="Page layout">${icons.viewPage}</button>
        <button class="view" aria-label="Page break preview">${icons.viewBreak}</button>
        <button class="z" aria-label="Zoom out">−</button>
        <label class="slide"><input type="range" min="10" max="192" value="87" aria-label="Zoom" /></label>
        <button class="z" aria-label="Zoom in">+</button>
        <span class="pct">85%</span>
      </div>
      <div class="task"><div class="lit"></div><div class="dark"></div></div>`;
  }
}

@customElement("app-root")
export class AppRoot extends LitElement {
  static styles = css`
    :host { display: flex; flex-direction: column; height: 100vh; overflow: hidden; font: 12px "Open Sans", "Noto Sans", sans-serif; }
  `;
  render() {
    return html`<xl-titlebar></xl-titlebar><xl-ribbon></xl-ribbon><xl-formula></xl-formula><xl-sheet></xl-sheet><xl-footer></xl-footer>`;
  }
}
